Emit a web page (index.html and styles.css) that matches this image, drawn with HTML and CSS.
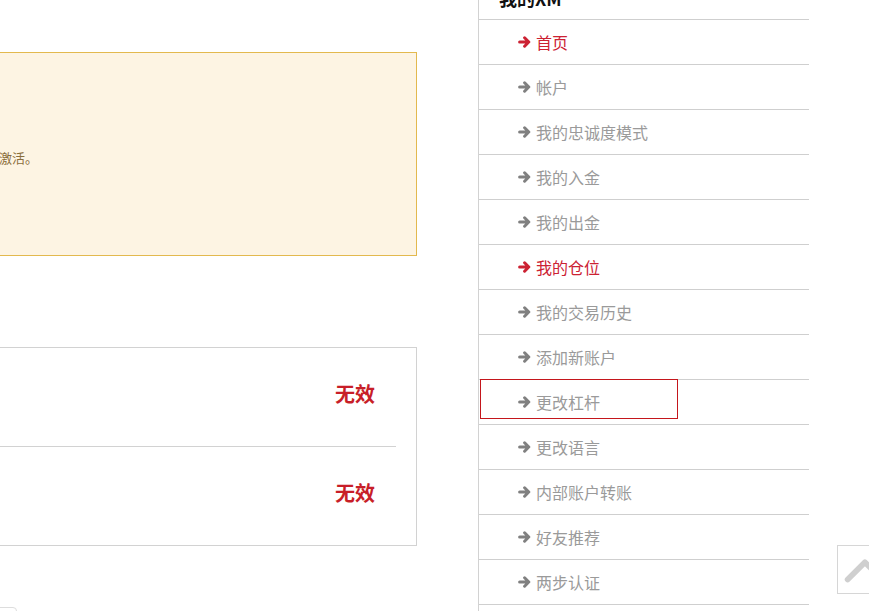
FILE: index.html
```html
<!DOCTYPE html>
<html lang="zh-CN">
<head>
<meta charset="utf-8">
<title>我的XM</title>
<link rel="stylesheet" href="styles.css">
</head>
<body>
<div class="page">
  <main class="main">
    <div class="alert">请上传您的身份证明文件以便您的账户被激活。</div>
    <div class="accounts">
      <div class="account-row"><span class="status">无效</span></div>
      <div class="account-row"><span class="status">无效</span></div>
    </div>
    <div class="pager"></div>
  </main>
  <aside class="sidebar">
    <h3 class="side-title">我的XM</h3>
    <ul class="menu">
      <li class="item active"><svg class="arr" viewBox="0 0 13 12"><path d="M1.6 6H10.6M6.6 1.8L10.8 6L6.6 10.2"/></svg>首页</li>
      <li class="item"><svg class="arr" viewBox="0 0 13 12"><path d="M1.6 6H10.6M6.6 1.8L10.8 6L6.6 10.2"/></svg>帐户</li>
      <li class="item"><svg class="arr" viewBox="0 0 13 12"><path d="M1.6 6H10.6M6.6 1.8L10.8 6L6.6 10.2"/></svg>我的忠诚度模式</li>
      <li class="item"><svg class="arr" viewBox="0 0 13 12"><path d="M1.6 6H10.6M6.6 1.8L10.8 6L6.6 10.2"/></svg>我的入金</li>
      <li class="item"><svg class="arr" viewBox="0 0 13 12"><path d="M1.6 6H10.6M6.6 1.8L10.8 6L6.6 10.2"/></svg>我的出金</li>
      <li class="item active"><svg class="arr" viewBox="0 0 13 12"><path d="M1.6 6H10.6M6.6 1.8L10.8 6L6.6 10.2"/></svg>我的仓位</li>
      <li class="item"><svg class="arr" viewBox="0 0 13 12"><path d="M1.6 6H10.6M6.6 1.8L10.8 6L6.6 10.2"/></svg>我的交易历史</li>
      <li class="item"><svg class="arr" viewBox="0 0 13 12"><path d="M1.6 6H10.6M6.6 1.8L10.8 6L6.6 10.2"/></svg>添加新账户</li>
      <li class="item focused"><svg class="arr" viewBox="0 0 13 12"><path d="M1.6 6H10.6M6.6 1.8L10.8 6L6.6 10.2"/></svg>更改杠杆</li>
      <li class="item"><svg class="arr" viewBox="0 0 13 12"><path d="M1.6 6H10.6M6.6 1.8L10.8 6L6.6 10.2"/></svg>更改语言</li>
      <li class="item"><svg class="arr" viewBox="0 0 13 12"><path d="M1.6 6H10.6M6.6 1.8L10.8 6L6.6 10.2"/></svg>内部账户转账</li>
      <li class="item"><svg class="arr" viewBox="0 0 13 12"><path d="M1.6 6H10.6M6.6 1.8L10.8 6L6.6 10.2"/></svg>好友推荐</li>
      <li class="item"><svg class="arr" viewBox="0 0 13 12"><path d="M1.6 6H10.6M6.6 1.8L10.8 6L6.6 10.2"/></svg>两步认证</li>
      <li class="item"><svg class="arr" viewBox="0 0 13 12"><path d="M1.6 6H10.6M6.6 1.8L10.8 6L6.6 10.2"/></svg>退出</li>
    </ul>
  </aside>
</div>
<a class="to-top" href="#" aria-label="返回顶部"><svg viewBox="0 0 52 49"><path d="M10 35L28 17L46 35"/></svg></a>
</body>
</html>
```

FILE: styles.css
```css
html, body {
  margin: 0;
  padding: 0;
  background: #fff;
  overflow: hidden;
  height: 100%;
}

body {
  font-family: "Noto Sans CJK SC", "Noto Sans", sans-serif;
  color: #333;
}

.page {
  display: flex;
  align-items: flex-start;
  margin: -40px 0 0 -256px;
}

.main {
  width: 673px;
  flex: none;
  padding-top: 92px;
}

.alert {
  background: #fdf4e3;
  border: 1px solid #e3b94e;
  color: #8a6d3b;
  font-size: 13px;
  line-height: 18px;
  padding: 96px 20px 88px 20px;
}

.accounts {
  margin-top: 91px;
  border: 1px solid #d2d2d2;
  padding-right: 20px;
  padding-bottom: 1px;
}

.account-row {
  height: 98px;
  box-sizing: border-box;
  display: flex;
  justify-content: flex-end;
  padding: 34px 21px 0 0;
}

.account-row + .account-row {
  border-top: 1px solid #d2d2d2;
}

.status {
  color: #c81e28;
  font-size: 20px;
  font-weight: 700;
  line-height: 24px;
}

.pager {
  margin-top: 61px;
  width: 271px;
  height: 30px;
  border: 1px solid #ddd;
  border-radius: 4px;
}

.sidebar {
  flex: none;
  margin-left: 61px;
  width: 330px;
  border-left: 1px solid #d2d2d2;
  min-height: 700px;
}

.side-title {
  margin: 0;
  padding: 26px 20px 9px 20px;
  font-size: 18px;
  line-height: 24px;
  font-weight: 700;
  color: #111;
  border-bottom: 1px solid #cfcfcf;
}

.menu {
  list-style: none;
  margin: 0;
  padding: 0;
}

.item {
  position: relative;
  display: flex;
  align-items: center;
  height: 44px;
  padding-left: 39px;
  border-bottom: 1px solid #cfcfcf;
  font-size: 16px;
  color: #9a9a9a;
}

.arr {
  width: 13px;
  height: 12px;
  margin-right: 5px;
  flex: none;
}

.arr path {
  fill: none;
  stroke: #808080;
  stroke-width: 3;
  stroke-linecap: round;
  stroke-linejoin: round;
}

.item.active {
  color: #cc2233;
}

.item.active .arr path {
  stroke: #cc2233;
}

.item.focused::after {
  content: "";
  position: absolute;
  left: 1px;
  top: -1px;
  width: 198px;
  height: 40px;
  box-sizing: border-box;
  border: 1px solid #c4161c;
}

.to-top {
  position: fixed;
  right: -20px;
  bottom: 17px;
  width: 52px;
  height: 49px;
  box-sizing: border-box;
  border: 1px solid #d6d6d6;
  background: #fff;
  display: block;
}

.to-top svg {
  display: block;
  width: 50px;
  height: 47px;
}

.to-top path {
  fill: none;
  stroke: #cfcfcf;
  stroke-width: 6;
  stroke-linecap: round;
  stroke-linejoin: round;
}
```
